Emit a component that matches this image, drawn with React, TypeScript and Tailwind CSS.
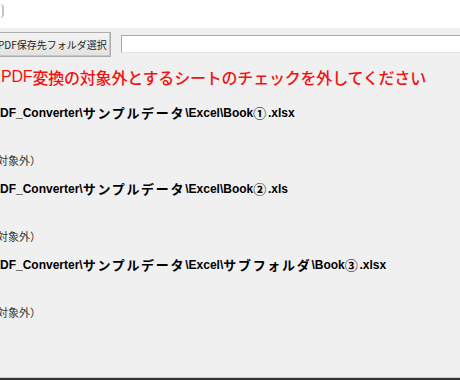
import React from "react"

const latin = { fontFamily: '"Liberation Sans", "Noto Sans CJK JP", sans-serif' }
const cjk = { fontFamily: '"Noto Sans CJK JP", "Liberation Sans", sans-serif' }

function Kana({ children }: { children: React.ReactNode }) {
  return (
    <span className="text-[13px] tracking-[1.7px]" style={cjk}>
      {children}
    </span>
  )
}

function Block({ path }: { path: React.ReactNode }) {
  return (
    <div className="pb-[6px]">
      <div className="h-[32px] flex items-center whitespace-nowrap text-[12px] font-bold text-black" style={latin}>
        {path}
      </div>
      <div className="h-[24px]" />
      <div className="h-[14px] flex items-center -ml-[3px] text-[11px] text-[#333] whitespace-nowrap" style={cjk}>
        対象外）
      </div>
    </div>
  )
}

export default function App() {
  return (
    <div className="w-[460px] h-[380px] overflow-hidden flex flex-col bg-[#f0f0f0]">
      {/* top strip */}
      <div className="h-[28px] bg-white flex items-start">
        <div className="mt-[4px] w-[4px] h-[14px] rounded-r-full border-r-2 border-[#c4c4c4]" />
      </div>

      {/* folder select */}
      <div className="pt-[4px] flex items-start">
        <button
          className="-ml-[4px] w-[115px] shrink-0 h-[25px] flex items-center pl-[1px] border border-[#acacac] bg-gradient-to-b from-[#f4f4f4] to-[#e2e2e2] text-[10px] text-[#222] whitespace-nowrap overflow-hidden shadow-[inset_-1px_-1px_0_#c8c8c8]"
          style={cjk}
        >
          PDF保存先フォルダ選択
        </button>
        <div className="ml-[10px] mt-[3px] flex-1 h-[18px] bg-white border-t border-l border-[#a8a8a8] border-b border-b-[#e3e3e3]" />
      </div>

      {/* notice */}
      <div
        className="h-[40px] flex items-center pl-[1px] text-[16px] font-medium tracking-[-0.2px] text-[#f31010] whitespace-nowrap"
        style={cjk}
      >
        <span style={latin}>PDF</span>変換の対象外とするシートのチェックを外してください
      </div>

      <Block
        path={
          <>
            DF_Converter\<Kana>サンプルデータ</Kana>\Excel\Book<Kana>①</Kana>.xlsx
          </>
        }
      />
      <Block
        path={
          <>
            DF_Converter\<Kana>サンプルデータ</Kana>\Excel\Book<Kana>②</Kana>.xls
          </>
        }
      />
      <Block
        path={
          <>
            DF_Converter\<Kana>サンプルデータ</Kana>\Excel\<Kana>サブフォルダ</Kana>\Book<Kana>③</Kana>.xlsx
          </>
        }
      />

      <div className="flex-1" />
      <div className="h-[1px] bg-[#c8c8c8]" />
      <div className="h-[2px] bg-[#333]" />
    </div>
  )
}
